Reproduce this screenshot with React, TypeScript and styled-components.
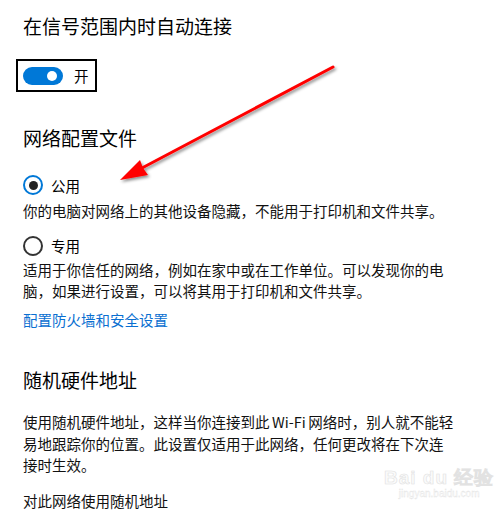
import styled, { createGlobalStyle } from "styled-components";

const GlobalStyle = createGlobalStyle`
  html, body {
    margin: 0;
    padding: 0;
    background: #ffffff;
  }
  body {
    font-family: "Noto Sans CJK SC", "Noto Sans", sans-serif;
    color: #000000;
  }
`;

const Page = styled.div`
  position: relative;
  width: 500px;
  height: 513px;
  overflow: hidden;
  padding: 13px 0 0 23px;
  box-sizing: border-box;
  display: flex;
  flex-direction: column;
  align-items: flex-start;
`;

const Heading = styled.div<{ $top: number }>`
  font-size: 19px;
  line-height: 26px;
  margin-top: ${(p) => p.$top}px;
  color: #000;
`;

const ToggleBox = styled.div`
  margin-top: 20px;
  margin-left: -7px;
  display: flex;
  align-items: center;
  gap: 11px;
  height: 29px;
  padding: 0 6px 0 5px;
  border: 2px solid #000;
  font-size: 14.5px;
`;

const Switch = styled.div`
  position: relative;
  width: 40px;
  height: 18px;
  border-radius: 9px;
  background: #0078d7;

  &::after {
    content: "";
    position: absolute;
    right: 6px;
    top: 4px;
    width: 10px;
    height: 10px;
    border-radius: 50%;
    background: #fff;
  }
`;

const RadioRow = styled.div<{ $top: number }>`
  margin-top: ${(p) => p.$top}px;
  display: flex;
  align-items: center;
  gap: 8px;
  height: 20px;
  font-size: 14.5px;
`;

const Radio = styled.div<{ $checked?: boolean }>`
  width: 20px;
  height: 20px;
  box-sizing: border-box;
  border-radius: 50%;
  border: 2px solid ${(p) => (p.$checked ? "#0078d7" : "#333")};
  display: flex;
  align-items: center;
  justify-content: center;

  &::after {
    content: "";
    display: ${(p) => (p.$checked ? "block" : "none")};
    width: 9px;
    height: 9px;
    border-radius: 50%;
    background: #222;
  }
`;

const Text = styled.div<{ $top: number; $width?: number }>`
  margin-top: ${(p) => p.$top}px;
  width: ${(p) => p.$width ?? 430}px;
  font-size: 14.5px;
  line-height: 21.5px;
  color: #111;
`;

const Latin = styled.span`
  word-spacing: -0.8px;
`;

const Link = styled.a`
  margin-top: 7px;
  font-size: 14.5px;
  line-height: 21.5px;
  color: #0a6fd1;
  text-decoration: none;
`;

const Overlay = styled.svg`
  position: absolute;
  left: 0;
  top: 0;
  pointer-events: none;
`;

const Watermark = styled.div`
  position: absolute;
  left: 384px;
  top: 468px;
  display: flex;
  flex-direction: column;
  align-items: center;
  color: #fbfbfb;
  font-family: "Liberation Sans", sans-serif;
  -webkit-text-stroke: 0.6px #e2e2e2;
`;

const WmLogo = styled.div`
  font-size: 19px;
  font-weight: 700;
  line-height: 20px;
  letter-spacing: 1px;
`;

const WmUrl = styled.div`
  font-size: 10px;
  line-height: 12px;
  -webkit-text-stroke: 0.3px #e2e2e2;
`;

export default function App() {
  return (
    <>
      <GlobalStyle />
      <Page>
        <Heading $top={0}>在信号范围内时自动连接</Heading>
        <ToggleBox>
          <Switch />
          <span>开</span>
        </ToggleBox>

        <Heading $top={33}>网络配置文件</Heading>
        <RadioRow $top={24}>
          <Radio $checked />
          <span>公用</span>
        </RadioRow>
        <Text $top={5}>你的电脑对网络上的其他设备隐藏，不能用于打印机和文件共享。</Text>
        <RadioRow $top={14}>
          <Radio />
          <span>专用</span>
        </RadioRow>
        <Text $top={3}>
          适用于你信任的网络，例如在家中或在工作单位。可以发现你的电脑，如果进行设置，可以将其用于打印机和文件共享。
        </Text>
        <Link href="#">配置防火墙和安全设置</Link>

        <Heading $top={37}>随机硬件地址</Heading>
        <Text $top={18} $width={434}>
          使用随机硬件地址，这样当你连接到此<Latin> Wi-Fi </Latin>网络时，别人就不能轻易地跟踪你的位置。此设置仅适用于此网络，任何更改将在下次连接时生效。
        </Text>
        <Text $top={14}>对此网络使用随机地址</Text>

        <Watermark>
          <WmLogo>Bai du 经验</WmLogo>
          <WmUrl>jingyan.baidu.com</WmUrl>
        </Watermark>

        <Overlay width="500" height="513" viewBox="0 0 500 513">
          <defs>
            <filter id="shadow" x="-20%" y="-20%" width="140%" height="140%">
              <feDropShadow dx="1.5" dy="2" stdDeviation="1.5" floodColor="#000" floodOpacity="0.45" />
            </filter>
          </defs>
          <g filter="url(#shadow)">
            <line x1="333" y1="67" x2="142" y2="168" stroke="#ff0000" strokeWidth="3" strokeLinecap="round" />
            <polygon points="120,180 140,160 143,168 148,175" fill="#ff0000" />
          </g>
        </Overlay>
      </Page>
    </>
  );
}
